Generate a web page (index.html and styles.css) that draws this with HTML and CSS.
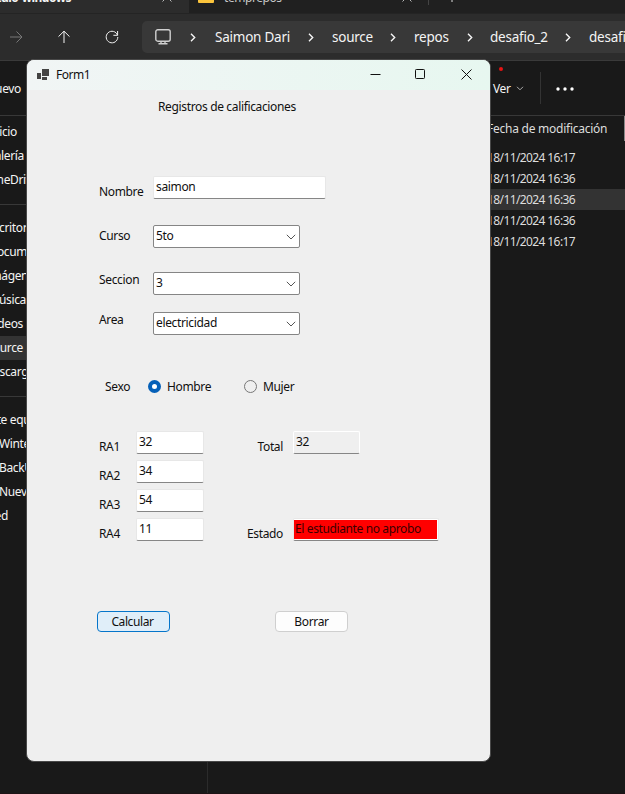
FILE: index.html
```html
<!DOCTYPE html>
<html lang="es">
<head>
<meta charset="utf-8">
<title>Form1</title>
<link rel="stylesheet" href="styles.css">
</head>
<body>
<div class="explorer">
  <div class="tabs">
    <div class="tab tab-active"><span class="tab-name">titulo-windows</span>
      <svg class="tab-close" width="10" height="10" viewBox="0 0 10 10"><path d="M.5.5l9 9M9.5.5l-9 9"/></svg>
    </div>
    <div class="tab tab-other"><span class="folder"></span><span class="tab-name">temprepos</span>
      <svg class="tab-close" width="10" height="10" viewBox="0 0 10 10"><path d="M.5.5l9 9M9.5.5l-9 9"/></svg>
    </div>
    <span class="tab-sep"></span>
    <svg class="tab-plus" width="12" height="12" viewBox="0 0 12 12"><path d="M6 0v12M0 6h12"/></svg>
  </div>
  <div class="nav">
    <svg class="nav-forward" width="14" height="14" viewBox="0 0 14 14"><path d="M1 7h12M7.5 1.5L13 7l-5.500 5.500"/></svg>
    <svg class="nav-up" width="14" height="14" viewBox="0 0 14 14"><path d="M7 13V1.300M1.500 6.600L7 1.200l5.500 5.400"/></svg>
    <svg class="nav-reload" width="14" height="14" viewBox="0 0 14 14"><path d="M12.500 5.200A5.800 5.800 0 1 0 12.800 7M12.600 1v4.300H8.400"/></svg>
    <div class="address">
      <svg class="monitor" width="16" height="16" viewBox="0 0 16 16"><rect x=".8" y=".8" width="14.400" height="11.400" rx="2"/><path d="M6 12.500v2M10 12.500v2M3.500 14.700h9"/></svg>
      <svg class="chev c1" width="6" height="9" viewBox="0 0 6 9"><path d="M1 .8l3.700 3.700L1 8.200"/></svg>
      <span class="crumb k1">Saimon Dari</span>
      <svg class="chev" width="6" height="9" viewBox="0 0 6 9"><path d="M1 .8l3.700 3.700L1 8.200"/></svg>
      <span class="crumb k2">source</span>
      <svg class="chev" width="6" height="9" viewBox="0 0 6 9"><path d="M1 .8l3.700 3.700L1 8.200"/></svg>
      <span class="crumb k3">repos</span>
      <svg class="chev" width="6" height="9" viewBox="0 0 6 9"><path d="M1 .8l3.700 3.700L1 8.200"/></svg>
      <span class="crumb k4">desafio_2</span>
      <svg class="chev" width="6" height="9" viewBox="0 0 6 9"><path d="M1 .8l3.700 3.700L1 8.200"/></svg>
      <span class="crumb k5">desafio_2</span>
    </div>
  </div>
  <div class="commands">
    <span class="new">Nuevo</span>
    <span class="view">Ver<i class="badge"></i></span>
    <svg class="view-chev" width="8" height="5" viewBox="0 0 8 5"><path d="M1 .8l3 3 3-3"/></svg>
    <span class="cmd-sep"></span>
    <svg class="more" width="18" height="4" viewBox="0 0 18 4"><circle cx="2" cy="2" r="1.700"/><circle cx="9" cy="2" r="1.700"/><circle cx="16" cy="2" r="1.700"/></svg>
  </div>
  <div class="body">
    <div class="sidebar">
      <ul class="group">
        <li class="e17">Inicio</li><li class="e24">Galería</li><li class="e38">OneDrive</li>
      </ul>
      <ul class="group">
        <li class="e37">Escritorio</li><li class="e57">Documentos</li><li class="e39">Imágenes</li><li class="e26">Música</li><li class="e23">Vídeos</li><li class="e23 current">source</li><li class="e40">Descargas</li>
      </ul>
      <ul class="group">
        <li class="e45">Este equipo</li><li class="start">Winter</li><li class="start">BackUp</li><li class="start">Nuevo</li><li class="e8">Red</li>
      </ul>
    </div>
    <div class="files">
      <div class="file-head">Fecha de modificación</div>
      <div class="file">18/11/2024 16:17</div>
      <div class="file">18/11/2024 16:36</div>
      <div class="file selected">18/11/2024 16:36</div>
      <div class="file">18/11/2024 16:36</div>
      <div class="file">18/11/2024 16:17</div>
    </div>
  </div>
</div>

<div class="window">
  <div class="titlebar">
    <svg class="app-icon" width="13" height="12" viewBox="0 0 13 12"><path d="M0 4h4v6H0zM5 0h7v7H5zM5 8h5v3H5z"/></svg>
    <span class="caption">Form1</span>
    <svg class="win-btn min" width="11" height="11" viewBox="0 0 11 11"><path d="M.5 5.500h10"/></svg>
    <svg class="win-btn max" width="11" height="11" viewBox="0 0 11 11"><rect x=".5" y=".5" width="9" height="9" rx=".8"/></svg>
    <svg class="win-btn close" width="11" height="11" viewBox="0 0 11 11"><path d="M.5.5l10 10M10.500.5l-10 10"/></svg>
  </div>
  <div class="form">
    <div class="heading">Registros de calificaciones</div>
    <div class="row r-name"><label class="low">Nombre</label><div class="input wide">saimon</div></div>
    <div class="row r-curso"><label>Curso</label><div class="combo">5to<svg width="10" height="6" viewBox="0 0 10 6"><path d="M.8.8L5 5 9.200.8"/></svg></div></div>
    <div class="row r-seccion"><label class="high">Seccion</label><div class="combo">3<svg width="10" height="6" viewBox="0 0 10 6"><path d="M.8.8L5 5 9.200.8"/></svg></div></div>
    <div class="row r-area"><label class="high">Area</label><div class="combo">electricidad<svg width="10" height="6" viewBox="0 0 10 6"><path d="M.8.8L5 5 9.200.8"/></svg></div></div>
    <div class="row r-sexo"><span class="sexo">Sexo</span><span class="radio on"></span><span class="opt">Hombre</span><span class="radio"></span><span>Mujer</span></div>
    <div class="grades">
      <div class="grade"><label>RA1</label><div class="input">32</div><label class="result">Total</label><div class="input readonly">32</div></div>
      <div class="grade"><label>RA2</label><div class="input">34</div></div>
      <div class="grade"><label>RA3</label><div class="input">54</div></div>
      <div class="grade"><label>RA4</label><div class="input">11</div><label class="result">Estado</label><div class="input status"><span>El estudiante no aprobo</span></div></div>
    </div>
    <div class="buttons"><div class="button primary">Calcular</div><div class="button">Borrar</div></div>
  </div>
</div>
</body>
</html>
```
FILE: styles.css
```css
* { box-sizing: border-box; }
html, body { margin: 0; height: 794px; overflow: hidden; }
body {
  position: relative;
  width: 625px;
  background: #191919;
  font: 12px/16px "Noto Sans", "Open Sans", sans-serif;
  letter-spacing: -0.35px;
  color: #f4f4f4;
  white-space: nowrap;
}
svg { display: block; flex: none; fill: none; stroke: currentColor; }
ul { list-style: none; margin: 0; padding: 0; }

/* Explorer */
.explorer { height: 794px; overflow: hidden; border-bottom: 1px solid #1d1315; }
.tabs { display: flex; height: 13px; background: #202020; overflow: hidden; }
.tab { display: flex; height: 13px; }
.tab-name { height: 16px; margin-top: -10px; }
.tab-close { margin-top: -8px; color: #bbb; }
.tab-active { width: 189px; background: #2c2c2c; font-weight: 700; justify-content: flex-end; }
.tab-active .tab-name { margin-right: 91px; letter-spacing: -0.5px; }
.tab-active .tab-close { margin-right: 17px; }
.tab-other { width: 239px; color: #c8c8c8; border-bottom-left-radius: 3px; }
.tab-other .tab-name { letter-spacing: -0.45px; }
.folder { width: 16px; height: 3px; margin: 0 10px 0 9px; background: #fbc43c; border-radius: 0 0 1px 1px; }
.tab-other .tab-close { margin-left: auto; margin-right: 16px; }
.tab-sep { width: 1px; height: 5px; background: #444; }
.tab-plus { margin: -10px 0 0 17px; color: #ddd; }

.nav { display: flex; align-items: center; height: 48px; background: #2c2c2c; border-top: 1px solid #242424; border-bottom: 1px solid #3a3a3a; }
.nav-forward { margin-left: 9px; color: #777; }
.nav-up { margin-left: 34px; }
.nav-reload { margin-left: 34px; }
.address { display: flex; align-items: center; flex: 1; min-width: 0; height: 32px; margin-left: 23px; padding-left: 13px; background: #383838; border-radius: 5px 0 0 5px; overflow: hidden; font-size: 13.5px; line-height: 18px; letter-spacing: -0.24px; }
.monitor { stroke-width: 1.4; color: #d0d0d0; }
.chev { stroke-width: 1.4; }
.c1 { margin-left: 19px; }
.crumb { flex: none; }
.k1 { width: 93px; margin-left: 19px; }
.k2 { width: 58px; margin-left: 18px; }
.k3 { width: 53px; margin-left: 18px; }
.k4 { width: 75px; margin-left: 17px; }
.k5 { margin-left: 18px; }

.commands { display: flex; align-items: center; height: 55px; border-bottom: 1px solid #383838; }
.new { display: flex; justify-content: flex-end; width: 21px; padding-top: 2px; }
.view { position: relative; margin-left: 472px; width: 24px; padding-top: 2px; }
.badge { position: absolute; left: 6px; top: -12px; width: 4px; height: 4px; border-radius: 50%; background: #e81414; }
.view-chev { color: #aaa; margin-left: -1px; margin-right: 1px; }
.cmd-sep { width: 1px; height: 32px; margin-left: 15px; background: #333; }
.more { margin: 1px 0 0 15px; fill: #fff; stroke: none; }

.body { display: flex; height: 678px; }
.sidebar { width: 208px; border-right: 1px solid #2b2b2b; overflow: hidden; }
.group { padding: 4px 0 12px; border-bottom: 1px solid #383838; }
.group + .group { padding-top: 11px; }
.group:last-child { border: 0; }
.group li { display: flex; justify-content: flex-end; height: 24px; align-items: center; }
.group .start { justify-content: flex-start; text-indent: -1px; }
.e8 { width: 8px; } .e17 { width: 17px; } .e23 { width: 23px; } .e24 { width: 24px; }
.e26 { width: 26px; } .e37 { width: 37px; } .e38 { width: 38px; } .e39 { width: 40px; } .e40 { width: 40px; }
.e45 { width: 47px; } .e57 { width: 57px; }
.group .current { width: 207px; padding-right: 184px; background: #333; }
.files { flex: 1; color: #ddd; }
.file-head { height: 25px; padding: 5px 0 0 279px; margin-bottom: 6px; border-right: 1px solid #888; letter-spacing: -0.25px; }
.file { height: 21px; line-height: 21px; padding-left: 279px; letter-spacing: -0.6px; }
.selected { background: #333; }

/* Dialog window */
.window { position: absolute; left: 26px; top: 59px; width: 465px; height: 703px; border: 1px solid #484848; border-radius: 8px; background: #efefef; color: #101010; overflow: hidden; }
.titlebar { display: flex; align-items: center; height: 30px; padding: 0 18px 0 10px; background: linear-gradient(90deg, #f1f5f5, #e7f7f0); }
.app-icon { fill: #444; stroke: none; }
.caption { margin-left: 6px; letter-spacing: -0.45px; }
.min { margin-left: auto; margin-right: -1px; }
.max, .close { margin-left: 35px; }
.win-btn { margin-top: -1px; }
.close { margin-left: 35px; }
.form { padding-top: 9px; }
.heading { margin-left: 131px; height: 16px; }
.row { display: flex; }
.row label { width: 54px; padding-top: 3px; }
.row .low { padding-top: 8px; }
.row .high { padding-top: 0; }
.r-name { height: 24px; margin: 61px 0 0 72px; }
.r-curso { margin: 25px 0 0 72px; }
.r-seccion { margin: 24px 0 0 72px; }
.r-area { margin: 17px 0 0 72px; }
.input { width: 67px; height: 23px; padding: 2px 2px 0; background: #fff; border: 1px solid #e7e7e7; border-bottom-color: #868686; border-radius: 2px; }
.wide { width: 173px; }
.combo { display: flex; align-items: center; justify-content: space-between; width: 147px; height: 23px; padding: 0 3px 2px 2px; background: #fff; border: 1px solid #858585; border-radius: 2px; }
.combo svg { color: #555; margin-top: 3px; }
.r-sexo { align-items: center; height: 16px; margin: 44px 0 0 78px; }
.sexo { width: 43px; }
.radio { width: 13px; height: 13px; margin: -1px 6px 0 0; border: 1px solid #777; border-radius: 50%; }
.on { border: 4px solid #0560b8; background: #fff; }
.opt { width: 77px; }
.grades { display: grid; row-gap: 6px; margin: 36px 0 0 72px; }
.grade { display: flex; height: 23px; }
.grade label { width: 37px; padding-top: 8px; line-height: 16px; }
.grade .input { width: 68px; padding-left: 2px; letter-spacing: -0.45px; }
.grade .result { width: 89px; padding-right: 10px; text-align: right; }
.grade .readonly { width: 67px; background: #efefef; border-color: #fff; border-bottom-color: #868686; }
.grade .status { width: 146px; padding: 1px 1px 1px 0; background: #fff; letter-spacing: -0.38px; }
.status span { display: block; height: 19px; padding-left: 1px; background: #f00; color: #3b0000; line-height: 18px; }
.buttons { display: flex; gap: 105px; margin: 70px 0 0 70px; }
.button { width: 73px; height: 21px; border: 1px solid #cfcfcf; border-radius: 4px; background: #fdfdfd; text-align: center; line-height: 19px; }
.primary { padding-right: 2px; border-color: #0575ca; background: #e0eef9; letter-spacing: -0.4px; }
```
